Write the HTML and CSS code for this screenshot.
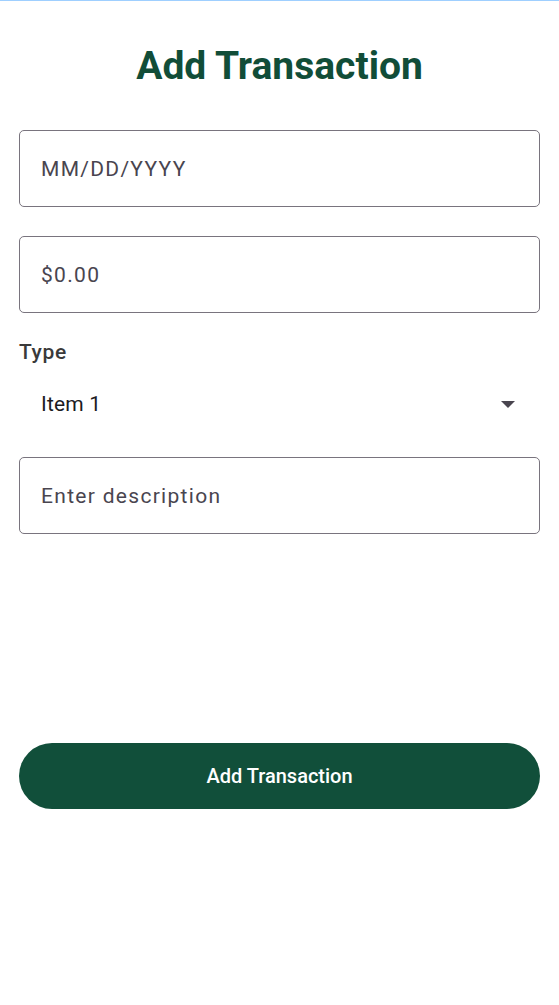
FILE: index.html
```html
<!DOCTYPE html>
<html>
<head>
<meta charset="utf-8">
<link rel="stylesheet" href="styles.css">
</head>
<body>
<div class="topline"></div>
<main class="screen">
  <h1 class="title">Add Transaction</h1>
  <div class="field"><span class="placeholder">MM/DD/YYYY</span></div>
  <div class="field"><span class="placeholder">$0.00</span></div>
  <div class="type-label">Type</div>
  <div class="select">
    <span class="select-value">Item 1</span>
    <svg class="arrow" width="14" height="7" viewBox="0 0 14 7"><path d="M0 0 L14 0 L7 7 Z" fill="#49454f"/></svg>
  </div>
  <div class="field desc"><span class="placeholder">Enter description</span></div>
  <button class="submit">Add Transaction</button>
</main>
</body>
</html>
```
FILE: styles.css
```css
html, body {
  margin: 0;
  padding: 0;
  background: #ffffff;
}
body {
  font-family: Roboto, "Noto Sans", sans-serif;
  width: 559px;
  height: 1005px;
  overflow: hidden;
}
.topline {
  height: 1px;
  background: #9fcfff;
}
.screen {
  display: flex;
  flex-direction: column;
  padding: 0 19px;
}
.title {
  margin: 41px 0 0;
  height: 48px;
  line-height: 48px;
  text-align: center;
  font-size: 39px;
  font-weight: 700;
  color: #114d38;
}
.field {
  box-sizing: border-box;
  height: 77px;
  border: 1px solid #79747e;
  border-radius: 5px;
  display: flex;
  align-items: center;
  padding: 0 21px;
  margin-top: 40px;
}
.field + .field {
  margin-top: 29px;
}
.placeholder {
  font-size: 21px;
  color: #49454f;
  letter-spacing: 1.3px;
}
.type-label {
  margin-top: 26px;
  font-size: 21px;
  font-weight: 500;
  color: #3a3a3a;
  letter-spacing: 0.6px;
  line-height: 26px;
}
.select {
  display: flex;
  align-items: center;
  justify-content: space-between;
  height: 78px;
  padding: 0 25px 0 22px;
}
.select-value {
  font-size: 21px;
  letter-spacing: 0.2px;
  color: #1c1b1f;
}
.arrow {
  display: block;
}
.field.desc {
  margin-top: 14px;
}
.submit {
  margin-top: 209px;
  height: 66px;
  border: none;
  border-radius: 33px;
  background: #114f3a;
  color: #ffffff;
  font-family: Roboto, "Noto Sans", sans-serif;
  font-size: 20px;
  font-weight: 500;
}
```
